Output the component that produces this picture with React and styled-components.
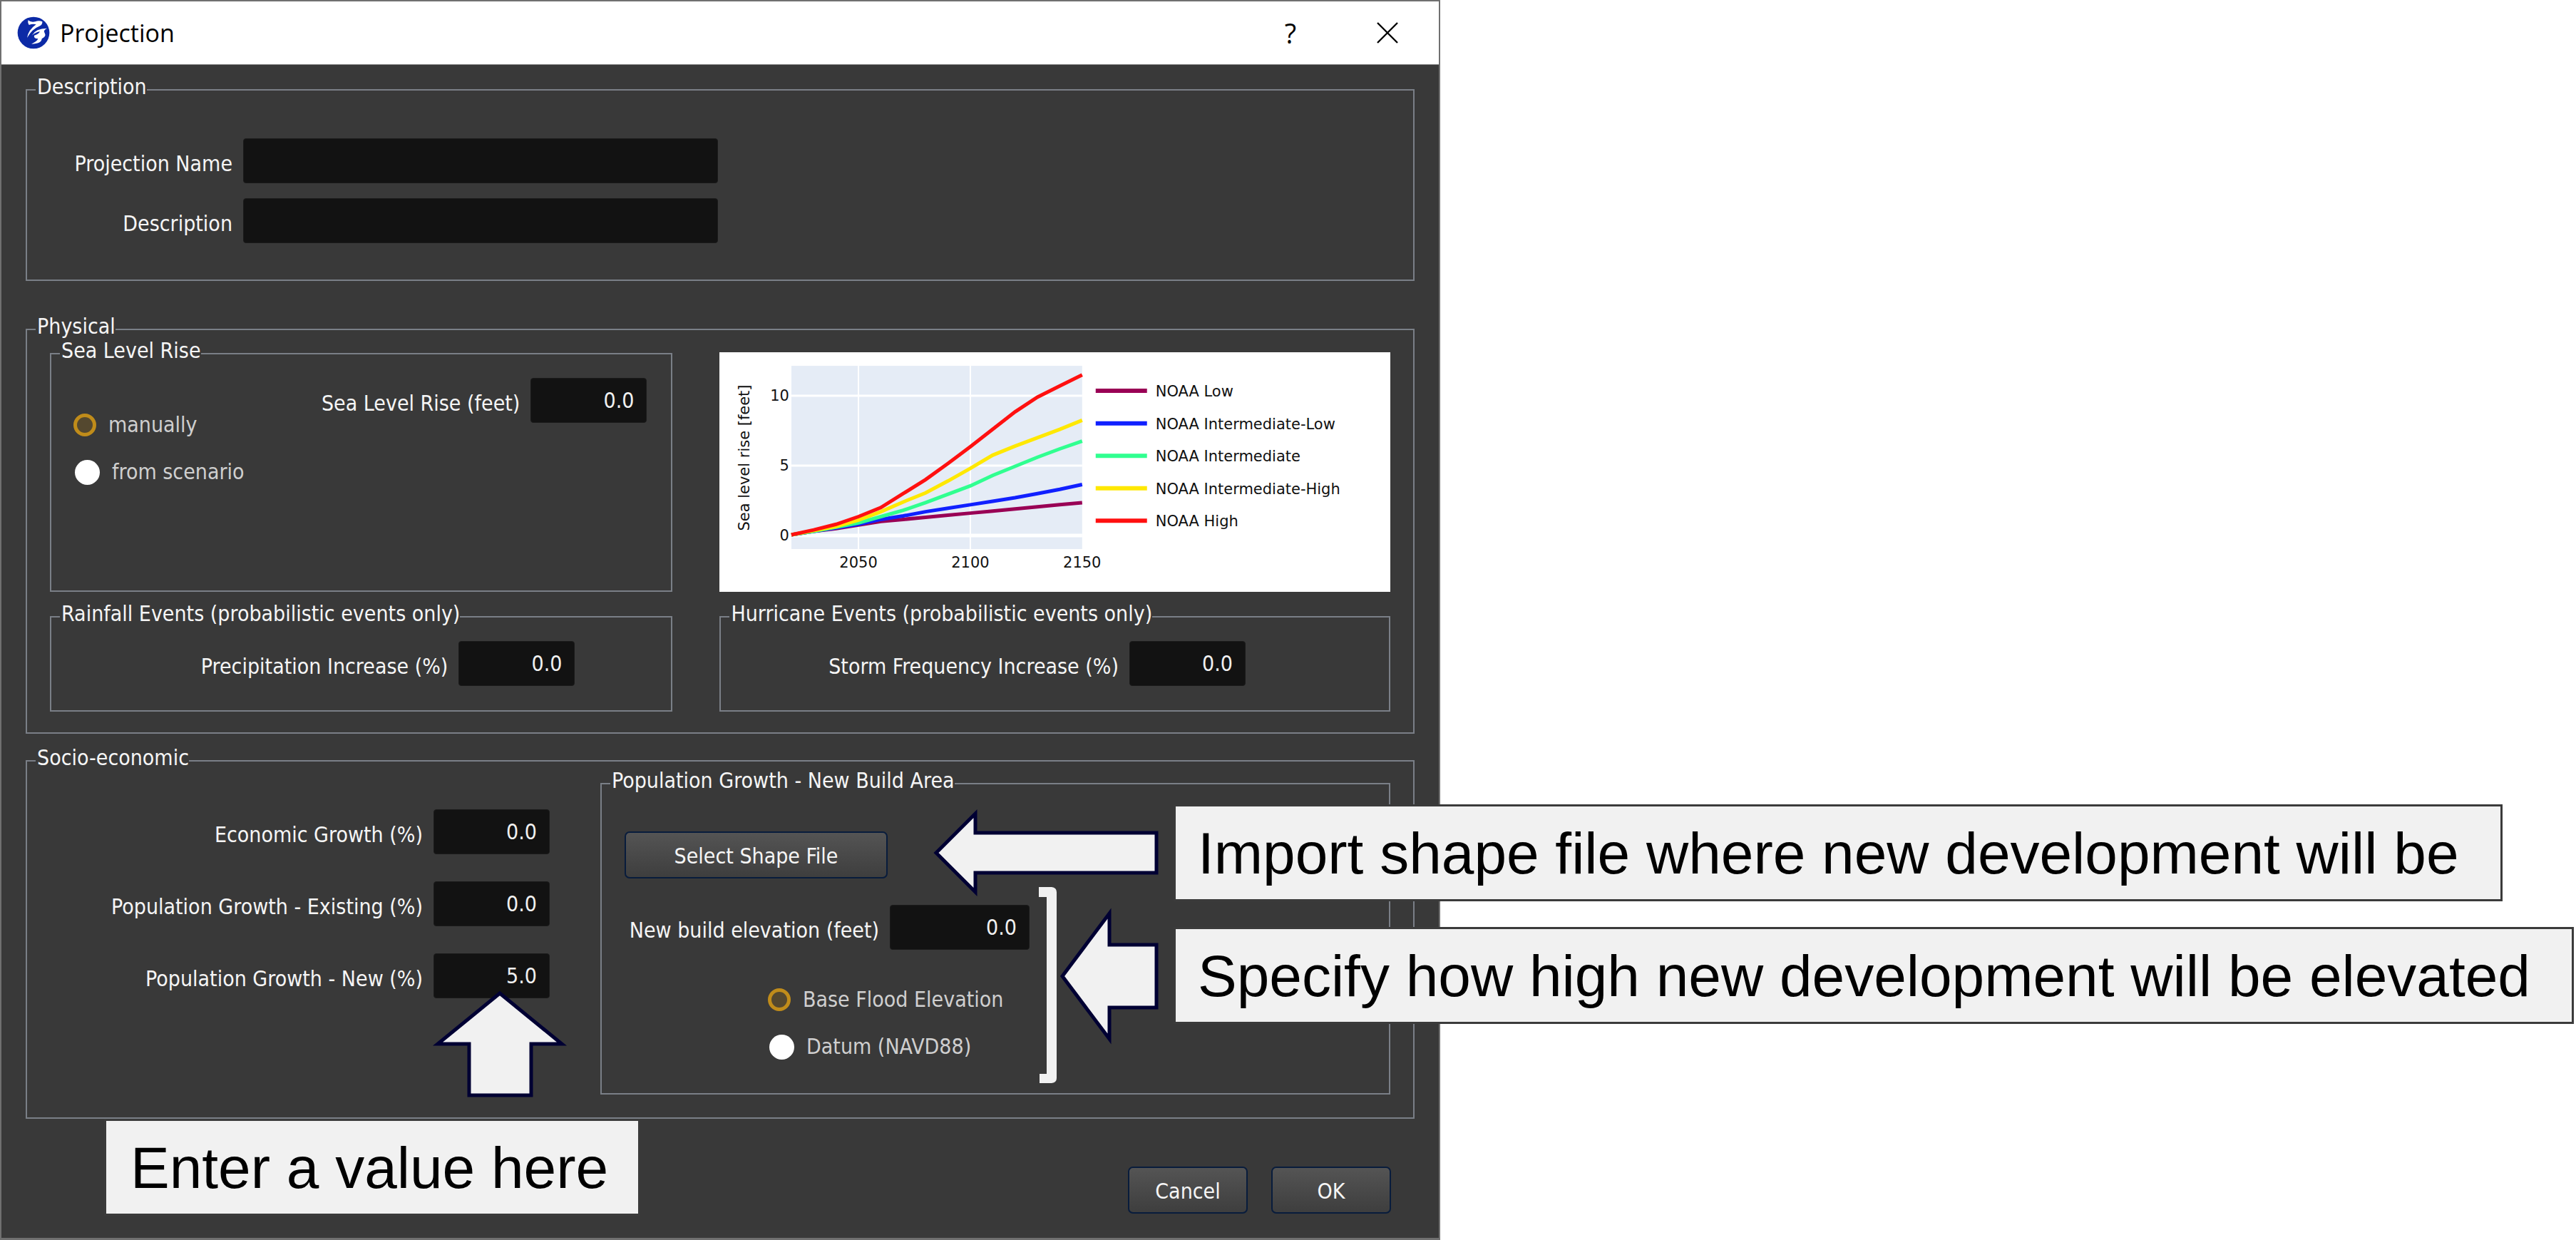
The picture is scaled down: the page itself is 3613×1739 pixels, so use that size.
import React from "react";
import styled, { createGlobalStyle, css } from "styled-components";

const GlobalStyle = createGlobalStyle`
  *, *::before, *::after { box-sizing: border-box; }
  body {
    margin: 0;
    background: #ffffff;
    font-family: "DejaVu Sans Condensed", "DejaVu Sans", sans-serif;
    font-size: 30px;
    line-height: 36px;
    color: #f5f5f5;
  }
`;

const Stage = styled.main`
  position: relative;
  display: flex;
  align-items: flex-start;
`;

const Dialog = styled.form`
  display: flex;
  flex-direction: column;
  flex: 0 1 2020px;
  min-width: 0;
  background: #393939;
  border: 2px solid #707070;
  border-bottom-width: 3px;
`;

const TitleBar = styled.header`
  display: flex;
  align-items: center;
  gap: 14px;
  height: 89px;
  padding: 0 22px;
  background: #ffffff;
  color: #000000;
  border-bottom: 1px solid #8a8a8a;
`;

const Title = styled.h1`
  flex: 1;
  margin: 0;
  font: 400 34px/46px "Open Sans", "Noto Sans", sans-serif;
`;

const TitleButton = styled.button`
  display: flex;
  align-items: center;
  justify-content: center;
  width: 136px;
  height: 80px;
  padding: 0;
  border: 0;
  background: none;
  color: #000000;
  font: 400 38px/46px "Open Sans", "Noto Sans", sans-serif;
`;

const TitleActions = styled.div`
  display: flex;
  margin-right: -18px;
`;

const Body = styled.div`
  display: flex;
  flex-direction: column;
  padding: 19px 34px 34px;
`;

const Frame = styled.fieldset`
  min-width: 0;
  margin: ${(p) => p.$top || 0}px 0 0;
  padding: 0;
  border: 2px solid #7a7f87;
`;

const Legend = styled.legend`
  margin-left: 12px;
  padding: 0 0 8px 2px;
  line-height: 24px;
`;

const FrameBody = styled.div`
  padding: ${(p) => p.$pad};
`;

const FieldStack = styled.div`
  display: flex;
  flex-direction: column;
  gap: ${(p) => p.$gap}px;
`;

const FieldRow = styled.div`
  display: flex;
  align-items: center;
  justify-content: ${(p) => (p.$start ? "flex-start" : "flex-end")};
  gap: 15px;
`;

const Label = styled.label`
  padding-top: 8px;
  text-align: right;
  white-space: nowrap;
  ${(p) => p.$width && css`width: ${p.$width}px;`}
`;

const TextBox = styled.input`
  width: ${(p) => p.$width || 163}px;
  height: 63px;
  padding: 0 17px;
  border: 1px solid #1a1a1a;
  border-radius: 4px;
  background: #121212;
  color: #f0f0f0;
  font: inherit;
  text-align: ${(p) => (p.$left ? "left" : "right")};
`;

const PhysicalGrid = styled.div`
  display: grid;
  grid-template-columns: minmax(0, 13fr) minmax(0, 14fr);
  gap: 19px 66px;
`;

const SocioGrid = styled.div`
  display: grid;
  grid-template-columns: minmax(0, 772fr) minmax(0, 1108fr);
`;

const GrowthFields = styled(FieldStack)`
  padding: 52px 71px 0 0;
`;

const BuildForm = styled.div`
  display: flex;
  flex-direction: column;
  align-items: flex-start;
  width: 568px;
`;

const ElevationRow = styled(FieldRow)`
  width: 100%;
  margin-top: 37px;
`;

const SeaLevelRow = styled.div`
  display: flex;
  justify-content: space-between;
  align-items: flex-start;
`;

const RadioList = styled.div`
  display: flex;
  flex-direction: column;
  gap: 30px;
  margin: ${(p) => p.$margin};
`;

const RadioLabel = styled.label`
  display: flex;
  align-items: center;
  height: 36px;
  gap: 17px;
  color: #cfcfcf;
  white-space: nowrap;
`;

const Radio = styled.input`
  appearance: none;
  width: 35px;
  height: 35px;
  margin: 0 0 0 2px;
  border-radius: 50%;
  background: #ffffff;
  &:checked {
    width: 32px;
    height: 32px;
    margin-left: 0;
    border: 5px solid #c08c1a;
    background: #54482f;
  }
`;

const PushButton = styled.button`
  width: ${(p) => p.$width}px;
  height: 66px;
  padding: 4px 0 0;
  border: 2px solid #081c3c;
  border-radius: 7px;
  background: linear-gradient(#545454, #3e3e3e);
  color: #f5f5f5;
  font: inherit;
`;

const Footer = styled.footer`
  display: flex;
  justify-content: flex-end;
  gap: 33px;
  margin-top: 67px;
  padding-right: 33px;
`;

const ChartBox = styled.figure`
  margin: 14px 0 0;
  height: 336px;
  background: #ffffff;
  svg { display: block; width: 100%; height: 100%; }
  text {
    font-family: "DejaVu Sans", sans-serif;
    font-size: 21px;
    fill: #111111;
  }
`;

const Callout = styled.p`
  position: absolute;
  left: ${(p) => p.$x}px;
  top: ${(p) => p.$y}px;
  margin: 0;
  padding: ${(p) => p.$pad || "20px 58px 18px 31px"};
  border: 3px solid #3b3b3b;
  background: #f1f1f1;
  color: #000000;
  font: 400 82px/92px "Liberation Sans", Arial, sans-serif;
  white-space: nowrap;
`;

const Marker = styled.svg`
  position: absolute;
  left: ${(p) => p.$x}px;
  top: ${(p) => p.$y}px;
  fill: #f1f1f1;
  stroke: #000033;
  stroke-width: 5px;
`;

const YEARS = Array.from({ length: 14 }, (_, i) => 2020 + i * 10);
const SERIES = [
  { name: "NOAA Low", color: "#990055", feet: [0.05, 0.3, 0.5, 0.75, 1.0, 1.15, 1.3, 1.45, 1.6, 1.75, 1.9, 2.05, 2.2, 2.35] },
  { name: "NOAA Intermediate-Low", color: "#1020ff", feet: [0.05, 0.3, 0.55, 0.8, 1.15, 1.4, 1.7, 1.95, 2.2, 2.45, 2.7, 3.0, 3.3, 3.65] },
  { name: "NOAA Intermediate", color: "#30ff90", feet: [0.05, 0.3, 0.6, 0.9, 1.35, 1.8, 2.35, 2.95, 3.55, 4.3, 4.95, 5.6, 6.2, 6.75] },
  { name: "NOAA Intermediate-High", color: "#ffe800", feet: [0.05, 0.35, 0.65, 1.1, 1.7, 2.4, 3.05, 3.9, 4.8, 5.75, 6.4, 7.0, 7.6, 8.25] },
  { name: "NOAA High", color: "#ff1010", feet: [0.05, 0.4, 0.8, 1.35, 2.0, 3.0, 4.0, 5.15, 6.35, 7.6, 8.85, 9.9, 10.7, 11.5] },
];
const PLOT = { left: 101, right: 509, top: 19, bottom: 276 };
const xOf = (year) => PLOT.left + ((year - 2020) * (PLOT.right - PLOT.left)) / 130;
const yOf = (feet) => 257 - feet * 19.6;

function SeaLevelChart() {
  return (
    <ChartBox>
      <svg viewBox="0 0 941 336" role="img" aria-label="Sea level rise scenarios">
        <rect x={PLOT.left} y={PLOT.top} width={PLOT.right - PLOT.left} height={PLOT.bottom - PLOT.top} fill="#e5ecf6" />
        {[2050, 2100].map((y) => (
          <line key={y} x1={xOf(y)} x2={xOf(y)} y1={PLOT.top} y2={PLOT.bottom} stroke="#fff" strokeWidth="2" />
        ))}
        {[0, 5, 10].map((f) => (
          <line key={f} x1={PLOT.left} x2={PLOT.right} y1={yOf(f)} y2={yOf(f)} stroke="#fff" strokeWidth={f ? 3 : 5} />
        ))}
        {SERIES.map((s) => (
          <polyline
            key={s.name}
            points={YEARS.map((y, i) => `${xOf(y)},${yOf(s.feet[i])}`).join(" ")}
            fill="none"
            stroke={s.color}
            strokeWidth="5"
          />
        ))}
        {[0, 5, 10].map((f) => (
          <text key={f} x="98" y={yOf(f) + 7} textAnchor="end">{f}</text>
        ))}
        {[2050, 2100, 2150].map((y) => (
          <text key={y} x={xOf(y)} y="302" textAnchor="middle">{y}</text>
        ))}
        <text transform="translate(42 148) rotate(-90)" textAnchor="middle">Sea level rise [feet]</text>
        {SERIES.map((s, i) => (
          <g key={s.name}>
            <line x1="528" x2="600" y1={54 + i * 45.6} y2={54 + i * 45.6} stroke={s.color} strokeWidth="6" />
            <text x="612" y={62 + i * 45.6}>{s.name}</text>
          </g>
        ))}
      </svg>
    </ChartBox>
  );
}

function Logo() {
  return (
    <svg width="46" height="46" viewBox="0 0 138 138" aria-hidden="true">
      <circle cx="69" cy="69" r="67" fill="#0c2aa6" />
      <g fill="#fff">
        <path d="M46 16Q58 26 76 22Q92 15 106 22Q108 36 92 42Q64 52 42 90Q48 56 80 34Q66 30 50 36Q44 26 46 16Z" />
        <path d="M62 80Q78 50 126 50Q108 58 116 70Q124 84 104 94Q102 116 60 116Q84 106 88 94Q68 92 72 80Q90 76 96 64Q78 66 62 80Z" />
      </g>
    </svg>
  );
}

function Group({ title, pad, top, children }) {
  return (
    <Frame $top={top}>
      <Legend>{title}</Legend>
      <FrameBody $pad={pad}>{children}</FrameBody>
    </Frame>
  );
}

function NumberField({ id, label, value }) {
  return (
    <FieldRow>
      <Label htmlFor={id}>{label}</Label>
      <TextBox id={id} type="text" defaultValue={value} />
    </FieldRow>
  );
}

function RadioOption({ name, label, checked }) {
  return (
    <RadioLabel>
      <Radio type="radio" name={name} defaultChecked={checked} />
      {label}
    </RadioLabel>
  );
}

export default function App() {
  return (
    <>
      <GlobalStyle />
      <Stage>
        <Dialog onSubmit={(e) => e.preventDefault()}>
          <TitleBar>
            <Logo />
            <Title>Projection</Title>
            <TitleActions>
              <TitleButton type="button" aria-label="Help">?</TitleButton>
              <TitleButton type="button" aria-label="Close">
                <svg width="30" height="30" viewBox="0 0 30 30" stroke="#000" strokeWidth="2.4">
                  <path d="M1 1L29 29M29 1L1 29" />
                </svg>
              </TitleButton>
            </TitleActions>
          </TitleBar>

          <Body>
            <Group title="Description" pad="52px 16px 51px 32px">
              <FieldStack $gap={21}>
                <FieldRow $start>
                  <Label htmlFor="name" $width={256}>Projection Name</Label>
                  <TextBox id="name" type="text" $width={666} $left />
                </FieldRow>
                <FieldRow $start>
                  <Label htmlFor="description" $width={256}>Description</Label>
                  <TextBox id="description" type="text" $width={666} $left />
                </FieldRow>
              </FieldStack>
            </Group>

            <Group title="Physical" top={52} pad="2px 32px 29px">
              <PhysicalGrid>
                <Group title="Sea Level Rise" pad="18px 34px 148px 31px">
                  <SeaLevelRow>
                    <RadioList $margin="48px 0 0">
                      <RadioOption name="slr" label="manually" checked />
                      <RadioOption name="slr" label="from scenario" />
                    </RadioList>
                    <NumberField id="slr" label="Sea Level Rise (feet)" value="0.0" />
                  </SeaLevelRow>
                </Group>
                <SeaLevelChart />
                <Group title="Rainfall Events (probabilistic events only)" pad="18px 135px 34px 16px">
                  <NumberField id="rain" label="Precipitation Increase (%)" value="0.0" />
                </Group>
                <Group title="Hurricane Events (probabilistic events only)" pad="18px 201px 34px 16px">
                  <NumberField id="storm" label="Storm Frequency Increase (%)" value="0.0" />
                </Group>
              </PhysicalGrid>
            </Group>

            <Group title="Socio-economic" top={22} pad="0 32px 32px">
              <SocioGrid>
                <GrowthFields $gap={38}>
                  <NumberField id="economic" label="Economic Growth (%)" value="0.0" />
                  <NumberField id="existing" label="Population Growth - Existing (%)" value="0.0" />
                  <NumberField id="new" label="Population Growth - New (%)" value="5.0" />
                </GrowthFields>
                <Group title="Population Growth - New Build Area" pad="51px 32px 47px">
                  <BuildForm>
                    <PushButton type="button" $width={369}>Select Shape File</PushButton>
                    <ElevationRow>
                      <Label htmlFor="elevation">New build elevation (feet)</Label>
                      <TextBox id="elevation" type="text" defaultValue="0.0" $width={196} />
                    </ElevationRow>
                    <RadioList $margin="52px 0 0 201px">
                      <RadioOption name="datum" label="Base Flood Elevation" checked />
                      <RadioOption name="datum" label="Datum (NAVD88)" />
                    </RadioList>
                  </BuildForm>
                </Group>
              </SocioGrid>
            </Group>

            <Footer>
              <PushButton type="button" $width={168}>Cancel</PushButton>
              <PushButton type="submit" $width={168}>OK</PushButton>
            </Footer>
          </Body>
        </Dialog>

        <Callout $x={1646} $y={1128}>Import shape file where new development will be</Callout>
        <Callout $x={1646} $y={1300}>Specify how high new development will be elevated</Callout>
        <Callout $x={146} $y={1569} $pad="20px 42px 18px 34px">Enter a value here</Callout>

        <Marker $x={1300} $y={1130} width="330" height="132" viewBox="1300 1130 330 132" aria-hidden="true">
          <path d="M1313 1196L1368 1141V1168H1622V1224H1368V1251Z" />
        </Marker>
        <Marker $x={1480} $y={1270} width="150" height="200" viewBox="1480 1270 150 200" aria-hidden="true">
          <path d="M1490 1369L1556 1281V1325H1622V1413H1556V1457Z" />
        </Marker>
        <Marker $x={600} $y={1380} width="200" height="165" viewBox="600 1380 200 165" aria-hidden="true">
          <path d="M701 1393L788 1464H745V1536H658V1464H614Z" />
        </Marker>
        <Marker $x={1457} $y={1244} width="26" height="276" viewBox="0 0 26 276" aria-hidden="true">
          <path d="M0 0H18Q25 1 25 7V268Q25 274 18 275H1V262H11V14H0Z" stroke="none" />
        </Marker>
      </Stage>
    </>
  );
}
